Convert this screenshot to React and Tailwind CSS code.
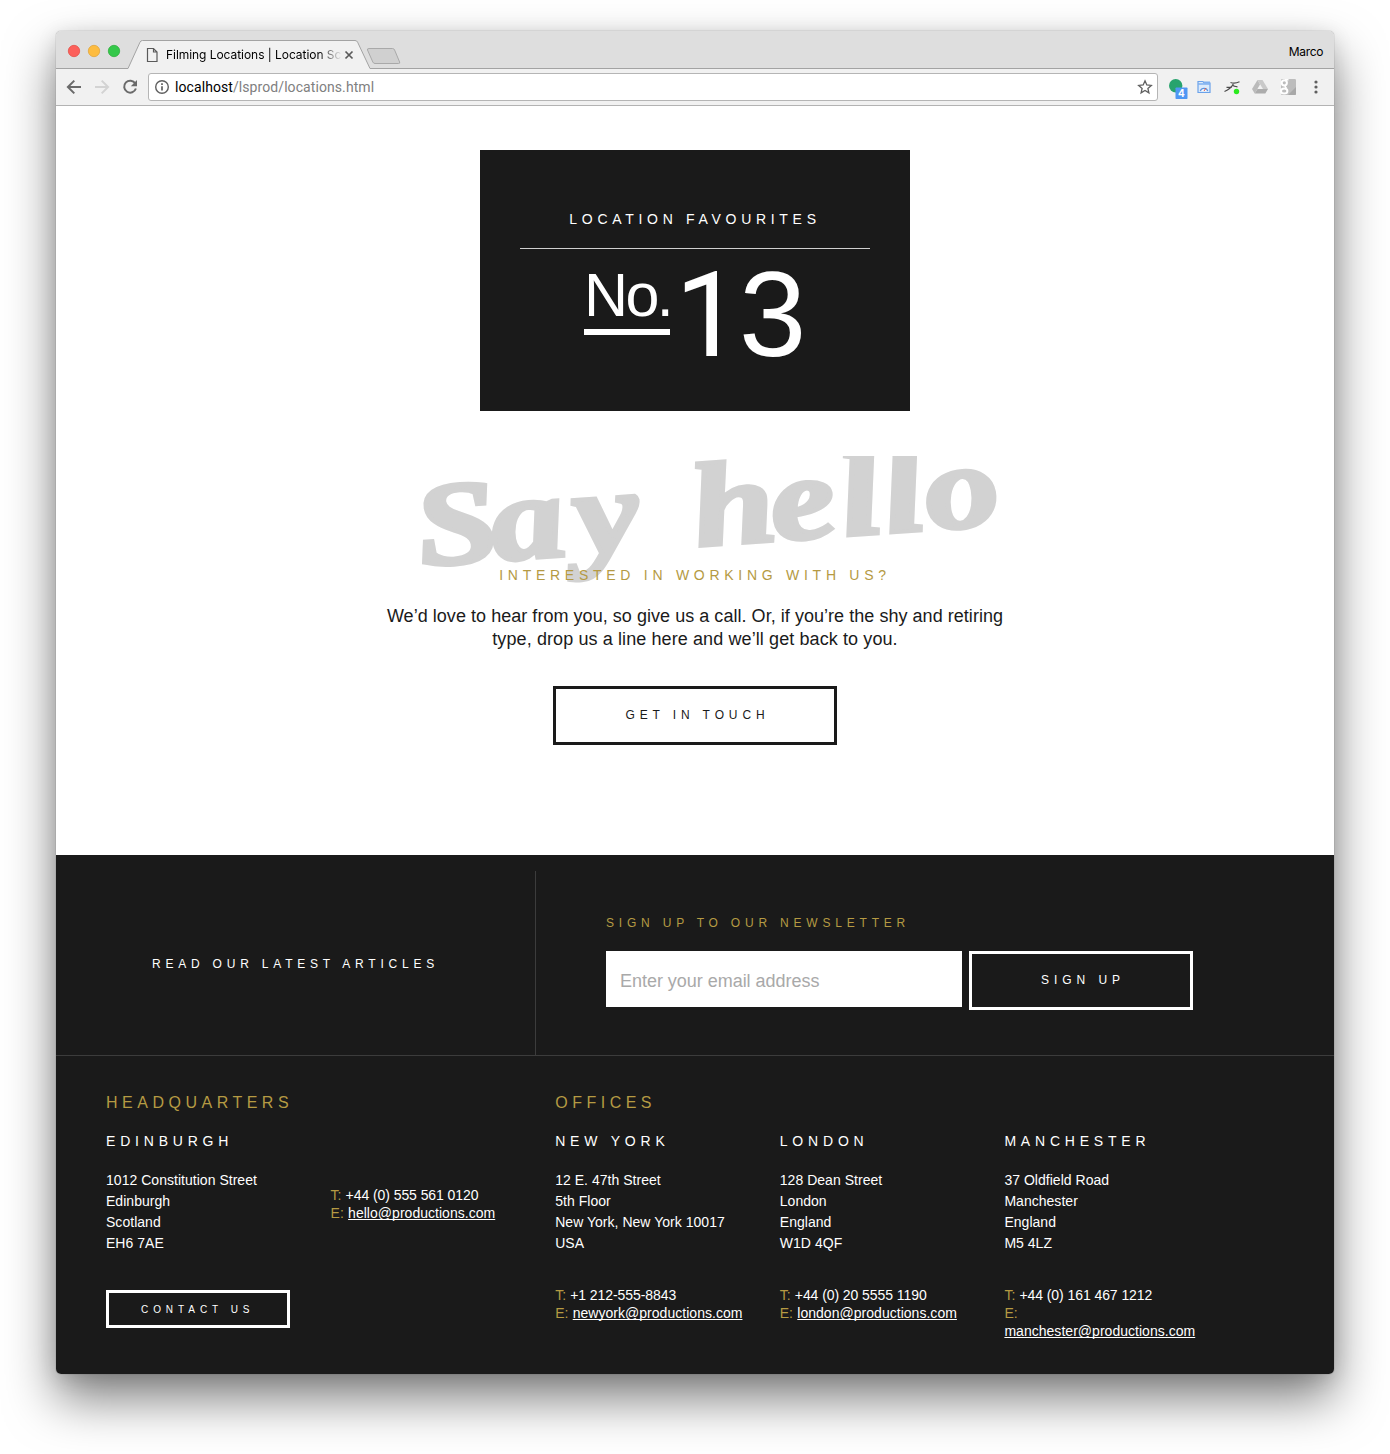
import React from "react";

const GOLD = "text-[#b59a43]";

function TabBar() {
  return (
    <div className="relative h-[38px] bg-[#dedede] flex items-start rounded-t-[5px]">
      <svg className="absolute left-0 top-0" width="1278" height="38" viewBox="0 0 1278 38" fill="none">
        <path d="M0 37.5H72L84 11.2Q84.800 9.500 86.500 9.500H299Q300.800 9.500 301.600 11.200L314 37.500H1278V38H0Z" fill="#f1f1f1" stroke="none" />
        <path d="M0 37.5H72L84 11.2Q84.800 9.500 86.500 9.500H299Q300.800 9.500 301.600 11.200L314 37.500H1278" stroke="#a3a3a3" />
        <path d="M313 17.500H336.500Q338 17.500 338.600 19L343.600 31Q344.300 32.500 342.500 32.500H319Q317.500 32.500 316.800 31L311.500 19Q311 17.500 313 17.500Z" fill="#d0d0d0" stroke="#a9a9a9" />
        <circle cx="18" cy="20" r="5.700" fill="#fc605b" stroke="#e2473f" strokeWidth=".7" />
        <circle cx="38" cy="20" r="5.700" fill="#fdbc40" stroke="#dfa032" strokeWidth=".7" />
        <circle cx="58" cy="20" r="5.700" fill="#34c84a" stroke="#27aa35" strokeWidth=".7" />
        <path d="M91.500 17.500H97.500L101 21V30.500H91.500ZM97.500 17.500V21H101" stroke="#5a5a5a" strokeWidth="1.200" />
        <path d="M289.500 20.500L296.500 27.500M296.500 20.500L289.500 27.500" stroke="#5a5a5a" strokeWidth="1.700" />
      </svg>
      <div className="relative ml-[110px] mt-[16px] w-[178px] h-4 whitespace-nowrap font-[Inter,sans-serif] text-[12px] leading-4 tracking-[-0.05px] text-black [mask-image:linear-gradient(to_right,black_152px,transparent_176px)]">
        Filming Locations | Location Sc
      </div>
      <div className="relative ml-auto mr-[11px] mt-[13px] font-[Inter,sans-serif] text-[12px] leading-4 tracking-[-0.35px] text-black">Marco</div>
    </div>
  );
}

function Toolbar() {
  return (
    <div className="h-[37px] bg-[#f1f1f1] border-b border-[#b3b3b3] flex items-center pl-[10px]">
      <div className="flex gap-3">
        <svg width="16" height="16" viewBox="0 0 16 16" fill="none" stroke="#6a6a6a" strokeWidth="2">
          <path d="M15 8H2.500M8.300 1.600L1.900 8L8.300 14.400" />
        </svg>
        <svg width="16" height="16" viewBox="0 0 16 16" fill="none" stroke="#d3d3d3" strokeWidth="2">
          <path d="M1 8H13.500M7.700 1.600L14.100 8L7.700 14.400" />
        </svg>
        <svg width="16" height="16" viewBox="0 0 16 16" fill="none">
          <path d="M13.300 4.500A6 6 0 1 0 13.900 9.500" stroke="#6a6a6a" strokeWidth="2" />
          <path d="M15 1V7.200H8.800Z" fill="#6a6a6a" />
        </svg>
      </div>
      <div className="ml-[10px] w-[1010px] h-[28px] bg-white border border-[#b5b5b5] rounded-[3px] flex items-center pl-[5px] pr-[4px]">
        <svg width="16" height="16" viewBox="0 0 16 16" fill="none">
          <circle cx="8" cy="8" r="6.300" stroke="#5f5f5f" strokeWidth="1.400" />
          <path d="M8 7.200V11.500M8 4.300V6" stroke="#5f5f5f" strokeWidth="1.700" />
        </svg>
        <div className="ml-[5px] font-[Roboto,sans-serif] text-[14px] leading-5 tracking-[0.08px] text-[#808080]">
          <span className="text-black">localhost</span>/lsprod/locations.html
        </div>
        <svg className="ml-auto" width="16" height="16" viewBox="0 0 16 16" fill="none" stroke="#5f5f5f" strokeWidth="1.300">
          <path d="M8 1.800L9.800 6L14.300 6.400L10.900 9.400L11.900 13.800L8 11.500L4.100 13.800L5.100 9.400L1.700 6.400L6.200 6Z" />
        </svg>
      </div>
      <div className="ml-[10px] flex gap-3">
        <svg width="20" height="24" viewBox="0 0 20 24" className="-mr-1">
          <circle cx="7.700" cy="10.700" r="6.700" fill="#27a36d" />
          <rect x="7.500" y="12.500" width="12" height="11.500" rx=".8" fill="#4f97f3" />
          <text x="13.500" y="22" textAnchor="middle" fontFamily="Inter, sans-serif" fontSize="10" fontWeight="700" fill="#fff">4</text>
        </svg>
        <svg width="16" height="24" viewBox="0 0 16 24" fill="none">
          <path d="M2 6.500H7L8 8H14V17.500H2Z" fill="#dbeafb" stroke="#6ba2ea" strokeWidth="1.200" />
          <path d="M2 9H14M8 7.300H14" stroke="#7fb0f0" strokeWidth="1.600" />
          <path d="M4.300 16A3.900 3.900 0 0 1 11.700 16" fill="#fff" stroke="#5c93df" strokeWidth="1.200" />
          <path d="M8 16L10 13" stroke="#d85b4c" />
        </svg>
        <svg width="16" height="24" viewBox="0 0 16 24" fill="none">
          <path d="M.5 16.500C4 15 7.500 12.500 9.300 9" stroke="#4b4b4b" strokeWidth="1.200" />
          <path d="M6.500 7.500C9 8.300 12 8.300 15.500 6.800M9 10.300C9.500 11.200 11 11.600 13.500 11.800M2.500 12.300H7.500" stroke="#4b4b4b" strokeWidth="1.200" />
          <circle cx="12.500" cy="16.500" r="2.700" fill="#2bea1e" />
        </svg>
        <svg width="16" height="24" viewBox="0 0 16 24">
          <path d="M5.500 5H10.500L16 14H11Z" fill="#c9c9c9" />
          <path d="M5.500 5L8 9.500L2.700 18.500L0 14Z" fill="#bababa" />
          <path d="M5.500 14H16L13.300 18.500H2.700Z" fill="#acacac" />
        </svg>
        <svg width="16" height="24" viewBox="0 0 16 24" fill="none">
          <rect x="1" y="4" width="15" height="16" rx="1.200" fill="#bdbdbd" />
          <path d="M8 20L16 12V19Q16 20 15 20Z" fill="#a8a8a8" />
          <circle cx="4.300" cy="7.800" r="2.600" stroke="#fff" strokeWidth="2" />
          <ellipse cx="4.200" cy="16" rx="3.200" ry="2.500" stroke="#fff" strokeWidth="2" />
          <path d="M5.500 10.500Q4.500 11.500 6.500 13.300M5 4.800H8.500" stroke="#fff" strokeWidth="1.600" />
        </svg>
        <svg width="16" height="24" viewBox="0 0 16 24" fill="#5f5f5f">
          <circle cx="8" cy="7" r="1.600" />
          <circle cx="8" cy="12" r="1.600" />
          <circle cx="8" cy="17" r="1.600" />
        </svg>
      </div>
    </div>
  );
}

function SayHello() {
  return (
    <svg className="mt-[45px] block" width="640" height="130" viewBox="375 456 640 130" fill="#d2d2d2" stroke="#d2d2d2" strokeWidth="4.500" fontFamily="'Liberation Serif', serif" fontWeight="700" fontStyle="italic" fontSize="128">
      <g transform="rotate(-4.100 420 567)">
        <text transform="translate(0 566) skewX(6) scale(1.150 0.930)" x="367.400 432 505 566 607.800 675.500 736.500 774 810.500" y="0">Say hello</text>
      </g>
    </svg>
  );
}

function Contact({ phone, email, wrap }) {
  return (
    <div className="leading-[18px]">
      <div className="whitespace-nowrap"><span className={`inline-block w-[15px] ${GOLD}`}>T:</span><span className="tracking-[-0.070px]">{phone}</span></div>
      <div className="whitespace-nowrap">
        <span className={wrap ? `block ${GOLD}` : `inline-block w-[17.500px] ${GOLD}`}>E:</span>
        <span className="underline underline-offset-1 decoration-1 [text-decoration-skip-ink:none] tracking-[0.03px]">{email}</span>
      </div>
    </div>
  );
}

function Office({ title, city, lines, children }) {
  return (
    <div className="w-[224.600px]">
      <h3 className={`h-6 text-[16px] leading-6 tracking-[4.500px] ${GOLD}`}>{title}</h3>
      <h4 className="mt-[16px] text-[14px] leading-5 tracking-[4.800px]">{city}</h4>
      <div className="mt-[19px] leading-[21px] h-[84px] tracking-[0.03px] whitespace-nowrap">
        {lines.map((l) => <div key={l}>{l}</div>)}
      </div>
      {children}
    </div>
  );
}

const OFFICES = [
  { title: "OFFICES", city: "NEW YORK", lines: ["12 E. 47th Street", "5th Floor", "New York, New York 10017", "USA"], phone: "+1 212-555-8843", email: "newyork@productions.com" },
  { title: "", city: "LONDON", lines: ["128 Dean Street", "London", "England", "W1D 4QF"], phone: "+44 (0) 20 5555 1190", email: "london@productions.com" },
  { title: "", city: "MANCHESTER", lines: ["37 Oldfield Road", "Manchester", "England", "M5 4LZ"], phone: "+44 (0) 161 467 1212", email: "manchester@productions.com", wrap: true },
];

export default function App() {
  return (
    <div className="w-[1390px] h-[1454px] bg-white pt-[31px] pl-[56px] overflow-hidden font-['Liberation_Sans',Arial,sans-serif]">
      <div className="w-[1278px] h-[1343px] rounded-[5px] bg-white flex flex-col shadow-[0_0_1px_rgba(0,0,0,0.6),0_25px_50px_rgba(0,0,0,0.5),0_4px_20px_rgba(0,0,0,0.12)]">
        <TabBar />
        <Toolbar />
        <main className="h-[749px] flex flex-col items-center text-[#1a1a1a]">
          <section className="mt-[44px] w-[430px] h-[261px] bg-[#1a1a1a] text-white px-10 pt-[59px]">
            <h2 className="text-center text-[14px] leading-5 tracking-[4.700px] whitespace-nowrap">LOCATION FAVOURITES</h2>
            <div className="mt-[19px] h-px bg-[#d0d0d0]" />
            <div className="flex pl-16">
              <div className="w-[86px] h-[86px] pt-4 border-b-[6px] border-white text-[61px] leading-[60px] tracking-[-2.600px]">No.</div>
              <div className="mt-[5px] ml-[5px] flex items-baseline leading-[120px]">
                <span className="w-[64px] font-[Roboto,sans-serif] text-[118px]">1</span>
                <span className="text-[121px]">3</span>
              </div>
            </div>
          </section>
          <SayHello />
          <h3 className={`relative -mt-[21px] text-[14px] leading-5 tracking-[4.730px] whitespace-nowrap ${GOLD}`}>INTERESTED IN WORKING WITH US?</h3>
          <p className="mt-[20px] text-center text-[18px] leading-[23px] tracking-[0.040px] whitespace-nowrap">
            We’d love to hear from you, so give us a call. Or, if you’re the shy and retiring<br /><span className="tracking-[0.100px]">type, drop us a line here and we’ll get back to you.</span>
          </p>
          <button className="mt-[35px] w-[284px] h-[59px] border-[3px] border-[#1a1a1a] flex justify-center items-start pt-[18px] pl-[5px] text-[12px] leading-4 tracking-[4.900px]">GET IN TOUCH</button>
        </main>
        <footer className="h-[519px] bg-[#1a1a1a] text-white rounded-b-[5px]">
          <div className="h-[201px] pt-4 border-b border-[#3c3c3c] flex">
            <div className="w-[480px] border-r border-[#3c3c3c] pt-[85px] pl-[96px] text-[12px] leading-4 tracking-[4.790px] whitespace-nowrap">READ OUR LATEST ARTICLES</div>
            <div className="pl-[70px] pt-[44px]">
              <div className={`text-[12px] leading-4 tracking-[4.800px] ${GOLD}`}>SIGN UP TO OUR NEWSLETTER</div>
              <div className="mt-[20px] flex items-start gap-[7px]">
                <div className="w-[356px] h-[56px] bg-white text-[#a9a9a9] pl-[14px] pt-[18px] text-[18px] leading-6 tracking-[-0.030px]">Enter your email address</div>
                <button className="w-[224px] h-[59px] border-[3px] border-white flex justify-center items-start pt-[18px] pl-1 text-[12px] leading-4 tracking-[4.940px]">SIGN UP</button>
              </div>
            </div>
          </div>
          <div className="flex pl-[50px] pt-[35px] text-[14px]">
            <Office title="HEADQUARTERS" city="EDINBURGH" lines={["1012 Constitution Street", "Edinburgh", "Scotland", "EH6 7AE"]}>
              <button className="mt-[36px] w-[184px] h-[38px] border-[3px] border-white flex items-start pt-[11px] pl-[32px] text-[10px] leading-3 tracking-[4.930px] whitespace-nowrap">CONTACT US</button>
            </Office>
            <div className="w-[224.600px] pt-[95px]">
              <Contact phone="+44 (0) 555 561 0120" email="hello@productions.com" />
            </div>
            {OFFICES.map((o) => (
              <Office key={o.city} title={o.title} city={o.city} lines={o.lines}>
                <div className="mt-[32px]"><Contact phone={o.phone} email={o.email} wrap={o.wrap} /></div>
              </Office>
            ))}
          </div>
        </footer>
      </div>
    </div>
  );
}
